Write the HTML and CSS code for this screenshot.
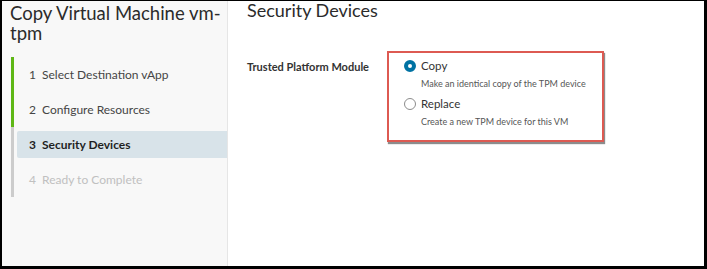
FILE: index.html
```html
<!DOCTYPE html>
<html>
<head>
<meta charset="utf-8">
<link rel="stylesheet" href="styles.css">
</head>
<body>
<div class="frame">
  <aside class="sidebar">
    <h1 class="title">Copy Virtual Machine vm-<wbr>tpm</h1>
    <ol class="steps">
      <li class="step done"><span class="step-box"><span class="num">1</span>Select Destination vApp</span></li>
      <li class="step done"><span class="step-box"><span class="num">2</span>Configure Resources</span></li>
      <li class="step current"><span class="step-box"><span class="num">3</span>Security Devices</span></li>
      <li class="step todo"><span class="step-box"><span class="num">4</span>Ready to Complete</span></li>
    </ol>
  </aside>
  <main class="content">
    <h2 class="heading">Security Devices</h2>
    <div class="form-row">
      <div class="label">Trusted Platform Module</div>
      <div class="options">
        <div class="option">
          <span class="radio checked"></span>
          <div class="opt-text">
            <div class="opt-title">Copy</div>
            <div class="opt-desc">Make an identical copy of the TPM device</div>
          </div>
        </div>
        <div class="option">
          <span class="radio"></span>
          <div class="opt-text">
            <div class="opt-title">Replace</div>
            <div class="opt-desc">Create a new TPM device for this VM</div>
          </div>
        </div>
      </div>
    </div>
  </main>
</div>
</body>
</html>
```

FILE: styles.css
```css
* { box-sizing: border-box; }
html, body { margin: 0; padding: 0; background: #000; }
body { font-family: "Lato", "Open Sans", sans-serif; color: #333; }
.frame {
  width: 707px;
  height: 269px;
  border-style: solid;
  border-color: #000;
  border-width: 1px 3px 3px 2px;
  display: flex;
  background: #fff;
  overflow: hidden;
}
.sidebar {
  width: 226px;
  flex: none;
  background: #f8f8f8;
  border-right: 1px solid #e6e6e6;
  padding: 2px 0 0 8px;
}
.title {
  margin: 0;
  font-weight: 400;
  font-size: 18.5px;
  line-height: 20px;
  color: #2b2b2b;
  padding-right: 0;
}
.steps {
  list-style: none;
  margin: 14px 0 0 1px;
  padding: 0;
}
.step {
  height: 35px;
  border-left: 3px solid #cccccc;
  display: flex;
  align-items: center;
  padding-left: 3px;
}
.step.done { border-left-color: #5eb715; }
.step-box {
  flex: 1;
  height: 27px;
  display: flex;
  align-items: center;
  padding-left: 12px;
  font-size: 12px;
  color: #454545;
  border-radius: 2px 0 0 2px;
}
.num { width: 13px; display: inline-block; }
.step.current .step-box {
  background: #d8e3e9;
  color: #1f1f1f;
  font-weight: 700;
}
.step.todo .step-box { color: #c0c0c0; }
.content {
  flex: 1;
  padding: 0 0 0 19px;
}
.heading {
  margin: -1px 0 0 0;
  font-weight: 400;
  font-size: 18px;
  line-height: 20px;
  color: #2b2b2b;
}
.form-row {
  display: flex;
  margin-top: 31px;
}
.label {
  width: 140px;
  font-size: 11px;
  font-weight: 700;
  color: #333;
  padding-top: 9px;
}
.options {
  width: 217px;
  height: 91px;
  border: 2px solid #dd5a52;
  box-shadow: 1px 2px 1px #8c8c8c;
  padding: 6px 0 0 15px;
}
.option {
  display: flex;
  align-items: flex-start;
  margin-bottom: 7px;
}
.radio {
  width: 12px;
  height: 12px;
  border-radius: 50%;
  border: 1px solid #8c8c8c;
  background: #fff;
  margin-top: 1px;
  margin-right: 5px;
  flex: none;
}
.radio.checked {
  border: 4px solid #0072a3;
  background: #fff;
}
.opt-title {
  font-size: 11.5px;
  line-height: 14px;
  color: #333;
}
.opt-desc {
  font-size: 9px;
  line-height: 12px;
  color: #565656;
  margin-top: 5px;
}
```
